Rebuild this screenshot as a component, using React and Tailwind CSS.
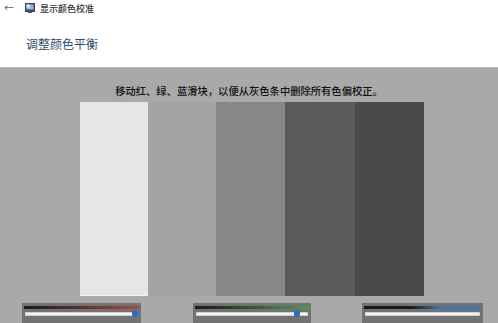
import React from "react";

function Slider({ w, grad, thumb, ml }) {
  return (
    <div className={`${ml} relative h-[30px] bg-[#727272]`} style={{ width: w }}>
      <div className="absolute left-[2px] right-[2px] top-[3px] h-[3px]" style={{ background: grad }} />
      <div className="absolute left-[3px] right-[3px] top-[9px] h-[4px] bg-[#f2f2f2] border border-[#cfcfcf]" />
      {thumb != null && (
        <div
          className="absolute top-[7px] h-[7px] w-[6px] rounded-full bg-[#2f6db0]"
          style={{ left: thumb }}
        />
      )}
    </div>
  );
}

export default function App() {
  return (
    <div
      className="w-[498px] h-[323px] overflow-hidden bg-[#a9a9a9] flex flex-col"
      style={{ fontFamily: '"Noto Sans CJK SC", "Noto Sans", sans-serif' }}
    >
      <div className="h-[68px] bg-white flex flex-col shrink-0 border-b border-[#b5b5b5]">
        <div className="flex items-center h-[14px] mt-[1px]">
          <span className="ml-[4px] text-[10px] leading-none text-[#666]">←</span>
          <svg className="ml-[11px]" width="10" height="10" viewBox="0 0 10 10">
            <rect x="0" y="0" width="10" height="9" fill="#3a4a66" />
            <rect x="1.5" y="1.5" width="7" height="5" fill="#9fb6d6" />
            <rect x="1.5" y="1.5" width="3" height="3" fill="#e8eef6" />
            <rect x="3" y="9" width="4" height="1" fill="#555" />
          </svg>
          <span className="ml-[5px] text-[9px] leading-none text-[#333] font-medium">显示颜色校准</span>
        </div>
        <div className="ml-[26px] mt-[23px] text-[12px] leading-none text-[#2d4a70]">调整颜色平衡</div>
      </div>
      <div className="flex flex-col">
        <div className="mt-[18px] h-[12px] flex justify-center text-[10.3px] leading-none text-[#111] font-medium">
          移动红、绿、蓝滑块，以便从灰色条中删除所有色偏校正。
        </div>
        <div className="mt-[4px] ml-[80px] flex h-[194px]">
          <div className="w-[68px] bg-[#e6e6e6] border-b border-[#f2f2f2]" />
          <div className="w-[68px] bg-[#a4a4a4]" />
          <div className="w-[69px] bg-[#878787]" />
          <div className="w-[70px] bg-[#5a5a5a]" />
          <div className="w-[69px] bg-[#4a4a4a]" />
        </div>
        <div className="mt-[7px] flex">
          <Slider w={119} grad="linear-gradient(to right, #1a1a1a, #a84848)" thumb={110} ml="ml-[22px]" />
          <Slider w={118} grad="linear-gradient(to right, #1a1a1a, #4f9a4f)" thumb={101} ml="ml-[52px]" />
          <Slider w={121} grad="linear-gradient(to right, #1a1a1a 40%, #3b78b0 65%, #3b78b0)" thumb={null} ml="ml-[51px]" />
        </div>
      </div>
    </div>
  );
}
